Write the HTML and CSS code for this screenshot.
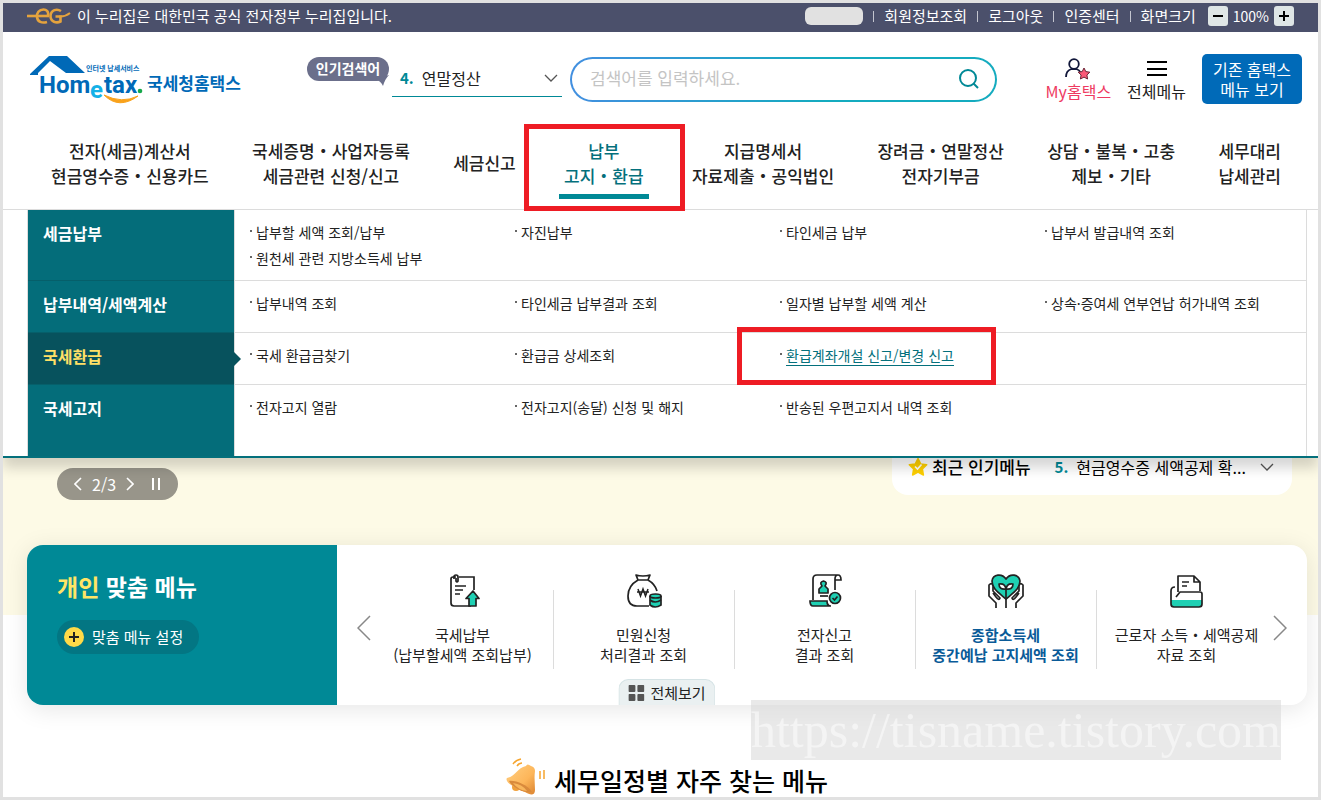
FILE: index.html
```html
<!DOCTYPE html>
<html lang="ko">
<head>
<meta charset="utf-8">
<meta name="viewport" content="width=device-width, initial-scale=1">
<title>국세청 홈택스</title>
<link rel="stylesheet" href="styles.css">
</head>
<body>
<div class="page">
  <div class="topbar">
    <div class="gov">
      <svg class="gov-mark" width="44" height="18" viewBox="0 0 44 18" aria-hidden="true">
        <g fill="none" stroke="#e5a33d" stroke-width="2.600">
          <path d="M0 9h22"/><path d="M32 9.500c4 .4 7-.4 11-3.500" stroke-width="2"/>
          <path d="M21 9C22 4 19 2.500 16.500 2.500 12 2.500 9.500 6 10 10c.5 5 5 6.500 10 5"/>
          <path d="M34 4c-4-2.500-10-1.500-10.500 5 0 6 6 7.500 10 5.500V9.500h-5"/>
        </g>
      </svg>
      <span>이 누리집은 대한민국 공식 전자정부 누리집입니다.</span>
    </div>
    <ul class="util">
      <li><span class="user-mask"></span></li>
      <li><a href="#">회원정보조회</a></li>
      <li><a href="#">로그아웃</a></li>
      <li><a href="#">인증센터</a></li>
      <li>화면크기</li>
    </ul>
    <div class="zoom">
      <button type="button" aria-label="축소"><svg width="12" height="12" viewBox="0 0 12 12"><path d="M1 6h10" stroke="#000" stroke-width="2"/></svg></button>
      <span>100%</span>
      <button type="button" aria-label="확대"><svg width="12" height="12" viewBox="0 0 12 12"><path d="M1 6h10M6 1v10" stroke="#000" stroke-width="2"/></svg></button>
    </div>
  </div>

  <header class="header">
    <div class="brand-row">
      <a class="logo" href="#" aria-label="Hometax 국세청홈택스">
        <svg width="212" height="50" viewBox="0 0 212 50">
          <path d="M0 20 19 2h18l18 17H36L20 7 8 19v2H0z" fill="#0069b7"/>
          <text class="logo-small" x="56" y="17">인터넷 납세서비스</text>
          <text class="logo-word" x="9" y="39">Hom</text>
          <text class="logo-e" x="60" y="44">e</text>
          <text class="logo-word" x="74" y="39">tax</text>
          <circle cx="110" cy="37" r="2.300" fill="#16a84a"/>
          <path d="M74 41q15 15 34 1-16 8-34-1z" fill="#f9a21b" stroke="#f9a21b"/>
          <text class="logo-ko" x="117" y="36">국세청홈택스</text>
        </svg>
      </a>
      <div class="popular">
        <span class="bubble">인기검색어
          <svg class="bubble-tail" width="14" height="11" viewBox="0 0 14 11" aria-hidden="true"><path d="M0 4 14 0q-4 4-6 11Q6 6 0 4z" fill="#6b6f8b"/></svg>
        </span>
        <button class="ranking" type="button" aria-haspopup="listbox">
          <b>4.</b><span>연말정산</span>
          <svg width="14" height="8" viewBox="0 0 14 8"><path d="m1 1 6 6 6-6" fill="none" stroke="#555" stroke-width="1.300"/></svg>
        </button>
      </div>
      <form class="search">
        <input type="search" aria-label="검색어" placeholder="검색어를 입력하세요.">
        <button type="submit" aria-label="검색"><svg width="22" height="22" viewBox="0 0 22 22"><circle cx="10" cy="10" r="8" fill="none" stroke="#008996" stroke-width="2"/><path d="m15.500 15.500 4.500 4.500" stroke="#008996" stroke-width="2"/></svg></button>
      </form>
      <div class="shortcuts">
        <a class="my" href="#">
          <svg width="28" height="24" viewBox="0 0 28 24"><circle cx="10" cy="7" r="4.800" fill="none" stroke="#11173a" stroke-width="1.800"/><path d="M2 20c0-4 2-7 5.500-8h5c2 .7 3.500 2 4.200 4" fill="none" stroke="#11173a" stroke-width="1.800"/><path d="m20 11 1.800 3.600 4 .6-2.900 2.800.7 4-3.600-1.900-3.600 1.900.7-4-2.900-2.800 4-.6z" fill="#fb5977" stroke="#6b2435"/></svg>
          <span>My홈택스</span>
        </a>
        <a class="all" href="#">
          <svg width="20" height="24" viewBox="0 0 20 24"><path d="M0 5h20M0 12h20M0 18h20" stroke="#000" stroke-width="2"/></svg>
          <span>전체메뉴</span>
        </a>
        <button class="legacy" type="button">기존 홈택스<br>메뉴 보기</button>
      </div>
    </div>

    <nav class="nav">
      <a href="#">전자(세금)계산서<br>현금영수증・신용카드</a>
      <a href="#">국세증명・사업자등록<br>세금관련 신청/신고</a>
      <a href="#">세금신고</a>
      <a href="#" class="current">납부<br>고지・환급<i class="mark mark-nav"></i></a>
      <a href="#">지급명세서<br>자료제출・공익법인</a>
      <a href="#">장려금・연말정산<br>전자기부금</a>
      <a href="#">상담・불복・고충<br>제보・기타</a>
      <a href="#">세무대리<br>납세관리</a>
    </nav>

    <div class="mega">
      <div class="mega-inner">
        <section class="mega-row">
          <h2>세금납부</h2>
          <ul>
            <li><a href="#">납부할 세액 조회/납부</a></li><li><a href="#">자진납부</a></li><li><a href="#">타인세금 납부</a></li><li><a href="#">납부서 발급내역 조회</a></li>
            <li><a href="#">원천세 관련 지방소득세 납부</a></li>
          </ul>
        </section>
        <section class="mega-row">
          <h2>납부내역/세액계산</h2>
          <ul>
            <li><a href="#">납부내역 조회</a></li><li><a href="#">타인세금 납부결과 조회</a></li><li><a href="#">일자별 납부할 세액 계산</a></li><li><a href="#">상속·증여세 연부연납 허가내역 조회</a></li>
          </ul>
        </section>
        <section class="mega-row active">
          <h2>국세환급</h2>
          <ul>
            <li><a href="#">국세 환급금찾기</a></li><li><a href="#">환급금 상세조회</a></li><li><a href="#" class="hover">환급계좌개설 신고/변경 신고</a><i class="mark mark-item"></i></li>
          </ul>
        </section>
        <section class="mega-row last">
          <h2>국세고지</h2>
          <ul>
            <li><a href="#">전자고지 열람</a></li><li><a href="#">전자고지(송달) 신청 및 해지</a></li><li><a href="#">반송된 우편고지서 내역 조회</a></li>
          </ul>
        </section>
      </div>
    </div>
  </header>

  <main>
    <section class="hero">
      <div class="pager">
        <button type="button" aria-label="이전"><svg width="8" height="14" viewBox="0 0 8 14"><path d="M7 1 1 7l6 6" fill="none" stroke="#fff" stroke-width="1.600"/></svg></button>
        <span>2/3</span>
        <button type="button" aria-label="다음"><svg width="8" height="14" viewBox="0 0 8 14"><path d="m1 1 6 6-6 6" fill="none" stroke="#fff" stroke-width="1.600"/></svg></button>
        <button class="pause" type="button" aria-label="정지"><svg width="8" height="12" viewBox="0 0 8 12"><path d="M1 0v12M7 0v12" stroke="#fff" stroke-width="2"/></svg></button>
      </div>
      <div class="recent">
        <svg width="20" height="20" viewBox="0 0 20 20" aria-hidden="true"><path d="m10 1.500 2.700 5.400 6 .9-4.300 4.200 1 6L10 15.200 4.600 18l1-6L1.300 7.800l6-.9z" fill="#ffd000" stroke="#ffd000" stroke-width="1.500" stroke-linejoin="round"/><path d="m7 9.500 2.500 2.500 4-4.500" fill="none" stroke="#fff" stroke-width="1.600"/></svg>
        <strong>최근 인기메뉴</strong>
        <button class="recent-pick" type="button" aria-haspopup="listbox">
          <b>5.</b><span>현금영수증 세액공제 확...</span>
          <svg width="14" height="8" viewBox="0 0 14 8"><path d="m1 1 6 6 6-6" fill="none" stroke="#555" stroke-width="1.300"/></svg>
        </button>
      </div>
    </section>

    <section class="custom">
      <div class="custom-head">
        <h2><em>개인</em> 맞춤 메뉴</h2>
        <button type="button" class="setup">
          <svg width="20" height="20" viewBox="0 0 20 20"><circle cx="10" cy="10" r="10" fill="#ffda48"/><path d="M5 10h10M10 5v10" stroke="#222" stroke-width="2"/></svg>
          맞춤 메뉴 설정
        </button>
      </div>
      <div class="quick">
        <button class="arrow prev" type="button" aria-label="이전"><svg width="14" height="26" viewBox="0 0 14 26"><path d="M13 1 1 13l12 12" fill="none" stroke="#888" stroke-width="1.500"/></svg></button>
        <ul>
          <li><a href="#">
            <svg width="36" height="36" viewBox="0 0 36 36"><g fill="none" stroke="#222" stroke-width="1.700"><path d="M11 4H8q-2 0-2 2v24q0 3 3 3h17M14 4h15v13"/><path d="M9 6V4q0-2 2-2t2 2v4q-1 2-2 0V5"/><path d="M10 13h11M10 17h8M10 21h5"/><path d="m28 18 6 7.500h-3V33h-7v-7.500h-3z" fill="#1fd0b3" stroke-linejoin="round"/></g></svg>
            <span>국세납부<br>(납부할세액 조회납부)</span></a></li>
          <li><a href="#">
            <svg width="36" height="36" viewBox="0 0 36 36"><g fill="none" stroke="#222" stroke-width="1.700"><path d="M10 2q7 2 14 0l-2 5H12z" stroke-linejoin="round"/><path d="M12 7C5 11 2 17 2 23q0 10 9 10h12M22 7q7 4 9 11"/><path d="m12 16 2.500 7 2.500-7 2.500 7 2.500-7M11 19h12" stroke-width="1.500"/><path d="M24 23v9q5 4 11 0v-9" fill="#1fd0b3"/><ellipse cx="29.500" cy="23" rx="5.500" ry="2" fill="#1fd0b3"/><path d="M24 27q5 4 11 0"/></g></svg>
            <span>민원신청<br>처리결과 조회</span></a></li>
          <li><a href="#">
            <svg width="36" height="36" viewBox="0 0 36 36"><g fill="none" stroke="#222" stroke-width="1.700"><path d="M6 27V6q0-4 4-4h21q3 0 3 5h-6M28 17V6q0-4 3-4"/><path d="M3 28h17q0 5 4 5H6q-3 0-3-5z" fill="#1fd0b3"/><path d="M12 20v-4l3-3q-3-4 1.500-5Q21 9 18 13l3 3v4z" fill="#1fd0b3" stroke-linejoin="round"/><path d="M13 23h8"/><circle cx="28" cy="25" r="5.500" fill="#1fd0b3"/><path d="m25.500 25 2 2 3-3.500"/></g></svg>
            <span>전자신고<br>결과 조회</span></a></li>
          <li class="strong"><a href="#">
            <svg width="36" height="36" viewBox="0 0 36 36"><g fill="none" stroke="#222" stroke-width="1.700" stroke-linejoin="round"><path d="M18 26C11 20 4 16 4 8 5 1 14 0 18 6c4-6 13-5 14 2 0 8-7 12-14 18z" fill="#1fd0b3"/><path d="M18 35V15M18 16q-7 1-7-5 6-1 7 5zM18 16q7 1 7-5-6-1-7 5z" fill="#fff"/><path d="M8 35v-5L1 23V12q3-3 4 1v5l7 7q-1 3-4-1l-3-4M28 35v-5l7-7V12q-3-3-4 1v5l-7 7q1 3 4-1l3-4" fill="#fff"/></g></svg>
            <span>종합소득세<br>중간예납 고지세액 조회</span></a></li>
          <li><a href="#">
            <svg width="36" height="36" viewBox="0 0 36 36"><g fill="none" stroke="#222" stroke-width="1.700" stroke-linejoin="round"><path d="M2 27h31v4q0 3-3 3H5q-3 0-3-3z" fill="#1fd0b3" stroke="none"/><path d="M9 19V3h16l6 6v9M25 3v6h6"/><path d="M13 9h7M13 13h5"/><path d="M6 14q-4 0-4 4v13q0 3 3 3h25q3 0 3-3V21q0-2-2-2H11l-4 5"/></g></svg>
            <span>근로자 소득・세액공제<br>자료 조회</span></a></li>
        </ul>
        <button class="arrow next" type="button" aria-label="다음"><svg width="14" height="26" viewBox="0 0 14 26"><path d="m1 1 12 12L1 25" fill="none" stroke="#888" stroke-width="1.500"/></svg></button>
      </div>
      <button class="view-all" type="button">
        <svg width="16" height="16" viewBox="0 0 16 16"><g fill="#555"><rect width="7" height="7" rx="1"/><rect x="9" width="7" height="7" rx="1"/><rect y="9" width="7" height="7" rx="1"/><rect x="9" y="9" width="7" height="7" rx="1"/></g></svg>
        전체보기
      </button>
    </section>

    <h2 class="schedule">
      <svg width="40" height="38" viewBox="0 0 40 38" aria-hidden="true">
        <defs><linearGradient id="bell" x1="0" y1="0" x2="1" y2="1"><stop offset="0" stop-color="#ffd083"/><stop offset=".6" stop-color="#fdb65a"/><stop offset="1" stop-color="#dc8430"/></linearGradient></defs>
        <circle cx="10" cy="29" r="4" fill="#f0a13c"/>
        <path d="M1 20C10 18 11 10 20 8q1-3 5 0 4 1 4 5c-1 7 0 13 0 19 0 6-5 5-10 2C12 31 3 27 1 23q-1-2 0-3z" fill="url(#bell)"/>
        <path d="M3 23c6-1 19 4 23 11-6 2-20-4-23-11z" fill="#d98a3c"/>
        <path d="M7 25q9 1 14 8-9-1-14-8z" fill="#f8b65c"/>
        <path d="M7 6q3-4 8-5M11 8q2-3 5-3M34 13v8M38 12v9" fill="none" stroke="#f6a52f" stroke-width="1.500"/>
      </svg>
      세무일정별 자주 찾는 메뉴
    </h2>
  </main>
  <div class="watermark">https://tisname.tistory.com</div>
</div>
</body>
</html>
```
FILE: styles.css
```css
* { box-sizing: border-box; }
body {
  margin: 0;
  font-family: "Noto Sans CJK KR", "Noto Sans", sans-serif;
  font-size: 15px;
  line-height: 20px;
  color: #222;
}
a { color: inherit; text-decoration: none; }
ul { list-style: none; margin: 0; padding: 0; }
h2 { margin: 0; }
button { font: inherit; color: inherit; background: none; border: 0; padding: 0; cursor: pointer; }
svg { display: block; flex: none; }

.page {
  position: relative;
  min-height: 100vh;
  border: 3px solid #e1e1e1;
  background: #fff;
  overflow: hidden;
}

/* top utility bar */
.topbar {
  display: flex;
  align-items: center;
  height: 29px;
  padding: 0 24px 3px;
  background: #4b506b;
  color: #fff;
}
.gov { display: flex; align-items: center; gap: 6px; margin-right: auto; }
.util { display: flex; align-items: center; font-size: 15px; }
.util li { display: flex; align-items: center; }
.util li + li::before { content: ""; width: 1px; height: 11px; margin: 0 10px; background: #c3c5cf; }
.user-mask { width: 58px; height: 18px; border-radius: 6px; background: #e1e1e1; }
.zoom { display: flex; align-items: center; gap: 5px; margin-left: 12px; font-size: 14px; }
.zoom button {
  display: grid;
  place-items: center;
  width: 20px;
  height: 20px;
  border-radius: 3px;
  background: #dfe6e6;
}

/* header */
.header { position: relative; z-index: 2; background: #fff; border-bottom: 1px solid #dcdcdc; }
.brand-row { display: flex; align-items: center; padding: 22px 16px 34px 27px; }
.logo text { fill: #0069b7; font-weight: 700; }
.logo-small { font-size: 7px; }
.logo .logo-word { font-family: Roboto, sans-serif; font-size: 24px; }
.logo .logo-e { font-family: Roboto, sans-serif; font-size: 24px; fill: #14b1e7; }
.logo-ko { font-size: 17px; }
.popular { display: flex; align-self: flex-start; gap: 3px; margin: 3px 8px 0 65px; }
.bubble {
  position: relative;
  align-self: flex-start;
  width: 82px;
  height: 24px;
  border-radius: 12px;
  background: #6b6f8b;
  color: #fff;
  font-size: 14px;
  font-weight: 700;
  line-height: 22px;
  text-align: center;
}
.bubble-tail { position: absolute; right: 0; top: 18px; }
.ranking {
  display: flex;
  align-items: center;
  width: 170px;
  height: 40px;
  padding: 2px 4px 0 8px;
  border-bottom: 1px solid #008996;
  font-size: 16px;
}
.ranking b, .recent-pick b { margin-right: 8px; color: #008996; font-size: 15px; }
.ranking svg { margin-left: auto; }
.search {
  display: flex;
  align-items: center;
  flex: 1;
  height: 45px;
  padding: 0 15px 0 18px;
  border: 2px solid transparent;
  border-radius: 23px;
  background: linear-gradient(#fff, #fff) padding-box, linear-gradient(90deg, #428fe0, #14abbf 60%) border-box;
}
.search input {
  flex: 1;
  min-width: 0;
  padding: 0 0 2px;
  border: 0;
  outline: 0;
  background: none;
  font: inherit;
  font-size: 17px;
}
.search input::placeholder { color: #c4c4c4; }
.shortcuts { display: flex; align-items: center; gap: 16px; margin-left: 49px; font-size: 16px; }
.my, .all { display: flex; flex-direction: column; align-items: center; }
.my { color: #ee3a61; }
.legacy {
  width: 100px;
  height: 50px;
  border-radius: 5px;
  background: #006ab8;
  color: #fff;
}

.nav {
  display: flex;
  justify-content: space-between;
  align-items: center;
  padding: 0 37px 0 48px;
  height: 71px;
  font-size: 17px;
  font-weight: 500;
  line-height: 25px;
  text-align: center;
  white-space: nowrap;
}
.nav a { padding-bottom: 22px; }
.nav .current {
  position: relative;
  padding: 0 5px 6px;
  margin-bottom: 11px;
  border-bottom: 5px solid #008996;
  color: #04707c;
}
.mark { position: absolute; border: 5px solid #ee1c24; pointer-events: none; }
.mark-nav { inset: -14px -36px -17px -35px; z-index: 3; }
.mark-item { inset: -15px 34px -17px -28px; z-index: 3; }

/* open menu panel */
.mega {
  position: absolute;
  left: 0;
  right: 0;
  top: calc(100% + 1px);
  padding: 0 11px 0 24px;
  background: #fff;
  border-bottom: 2px solid #04707c;
  box-shadow: 0 10px 12px rgba(0, 0, 0, .16);
  clip-path: inset(0 0 -30px 0);
}
.mega-inner { border: solid #dcdcdc; border-width: 0 1px; }
.mega-row { display: grid; grid-template-columns: 206px 1fr; line-height: 26px; min-height: 52px; }
.mega-row h2 {
  position: relative;
  padding: 10px 15px;
  background: #046d7a;
  border-bottom: 1px solid #065f6a;
  color: #fff;
  font-size: 16px;
  line-height: 26px;
}
.mega-row ul {
  display: grid;
  grid-template-columns: repeat(4, 1fr);
  align-content: start;
  padding: 9px 11px 9px 0;
  border: solid #dcdcdc;
  border-width: 0 0 1px 1px;
}
.mega-row li { position: relative; padding-left: 21px; white-space: nowrap; }
.mega-row li::before { content: ""; position: absolute; left: 15px; top: 11px; width: 2px; height: 2px; background: #666; }
.mega-row a { display: inline-block; font-size: 14px; }
.mega-row.active h2 { background: #07525d; color: #ffe066; }
.mega-row.active h2::after {
  content: "";
  position: absolute;
  left: 100%;
  top: 19px;
  z-index: 1;
  border: 7px solid transparent;
  border-left-color: #07525d;
  border-right: 0;
}
.mega-row .hover { color: #04707c; line-height: 20px; border-bottom: 1px solid #04707c; }
.mega-row.last { min-height: 71px; }
.mega-row.last h2, .mega-row.last ul { border-bottom: 0; }

/* banner area */
.hero {
  display: flex;
  justify-content: space-between;
  align-items: flex-start;
  height: 405px;
  padding: 230px 26px 0 54px;
  background: #fdfae6;
}
.pager {
  display: flex;
  align-items: center;
  gap: 10px;
  height: 32px;
  margin-top: 28px;
  padding: 0 18px 0 17px;
  border-radius: 16px;
  background: #98958a;
  color: #fff;
  font-size: 16px;
}
.pager .pause { margin-left: 8px; }
.recent {
  display: flex;
  align-items: center;
  gap: 4px;
  width: 400px;
  height: 55px;
  padding: 0 18px 2px 16px;
  border-radius: 0 0 16px 16px;
  background: #fff;
  color: #000;
}
.recent strong { font-size: 17px; font-weight: 500; }
.recent-pick { display: flex; align-items: center; flex: 1; margin-left: 20px; font-size: 16px; }
.recent-pick svg { margin-left: auto; }

/* personal menu card */
.custom {
  position: relative;
  display: flex;
  min-height: 160px;
  margin: -70px 11px 0 24px;
  border-radius: 16px;
  background: #fff;
  box-shadow: 0 4px 24px rgba(0, 0, 0, .1);
}
.custom-head {
  width: 310px;
  padding: 26px 30px;
  border-radius: 16px 0 0 16px;
  background: #008996;
  color: #fff;
}
.custom-head h2 { font-size: 23px; line-height: 30px; }
.custom-head em { color: #ffe566; font-style: normal; }
.setup {
  display: flex;
  align-items: center;
  gap: 8px;
  height: 34px;
  margin-top: 19px;
  padding: 0 16px 0 7px;
  border-radius: 17px;
  background: #037683;
  font-size: 15px;
}
.quick { position: relative; flex: 1; padding: 28px 30px 0 35px; }
.quick ul { display: grid; grid-template-columns: repeat(5, 1fr); }
.quick li { position: relative; text-align: center; white-space: nowrap; }
.quick li + li::before { content: ""; position: absolute; left: 0; top: 17px; width: 1px; height: 79px; background: #dcdcdc; }
.quick li a { display: flex; flex-direction: column; align-items: center; gap: 16px; }
.quick .strong { color: #0a5b98; font-weight: 700; }
.arrow { position: absolute; top: 70px; }
.prev { left: 20px; }
.next { right: 20px; }
.view-all {
  position: absolute;
  left: 50%;
  bottom: 0;
  display: flex;
  align-items: center;
  gap: 6px;
  height: 26px;
  padding: 0 9px;
  transform: translateX(-50%);
  border: 1px solid #d5e3e5;
  border-bottom: 0;
  border-radius: 10px 10px 0 0;
  background: #eaf0f1;
}

.schedule {
  display: flex;
  justify-content: center;
  align-items: flex-end;
  gap: 8px;
  margin: 53px 11px 0 24px;
  color: #000;
  font-size: 25px;
  font-weight: 500;
  line-height: 32px;
}
.watermark {
  position: absolute;
  right: 37px;
  bottom: 37px;
  height: 60px;
  background: rgba(215, 215, 215, .55);
  color: rgba(255, 255, 255, .5);
  font-family: "Liberation Serif", serif;
  font-size: 50px;
  line-height: 60px;
}
```
